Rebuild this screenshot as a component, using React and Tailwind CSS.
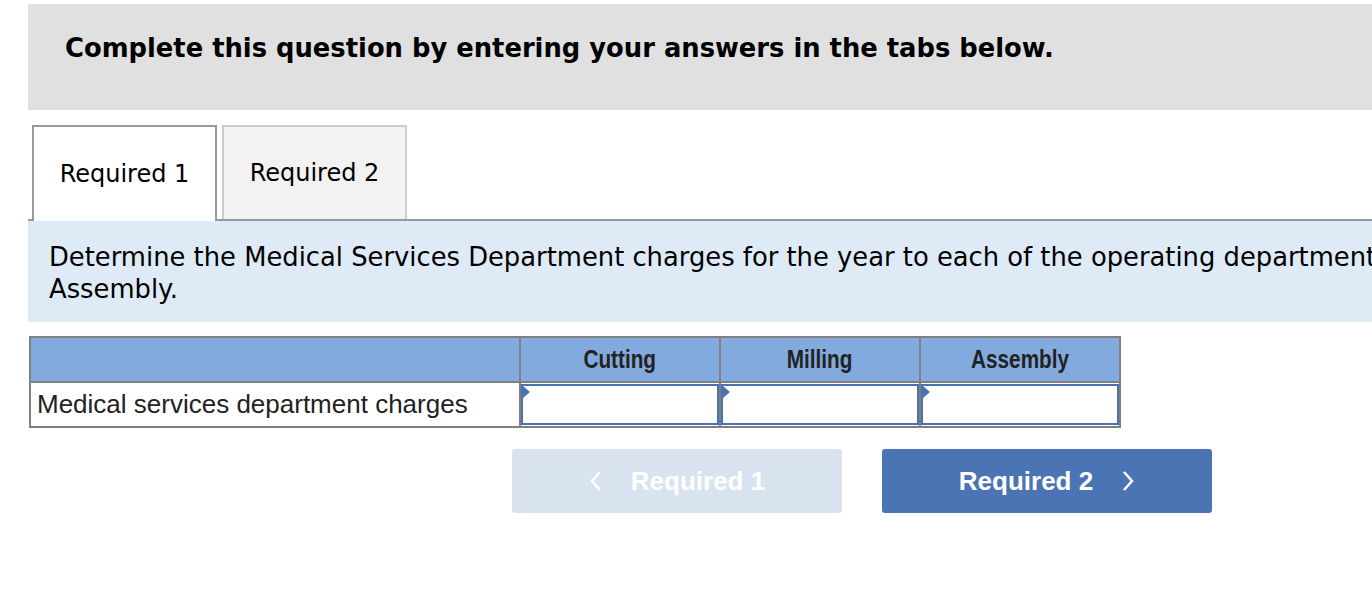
import React from "react";

const Cell = () => (
  <td className="w-[200px] h-[45px] border-2 border-[#808080] p-0 bg-white">
    <div className="relative h-[41px] border-2 border-[#4a72b0]">
      <span className="absolute left-0 top-0 w-0 h-0 border-y-[6px] border-y-transparent border-l-[7px] border-l-[#4a72b0]"></span>
    </div>
  </td>
);

const Head = ({ children }) => (
  <th className="w-[200px] h-[45px] border-2 border-[#808080] text-[25px] font-bold">
    <span className="inline-block scale-x-[0.83]">{children}</span>
  </th>
);

const App = () => {
  return (
    <div className="w-[1372px] h-[606px] overflow-hidden bg-white">
      <div className="w-[1500px] pl-[28px] pt-[4px] font-['DejaVu_Sans',Verdana,sans-serif] text-black">
        {/* Instructions bar */}
        <div className="h-[106px] bg-[#e0e0e0] pl-[37px] pt-[29px]">
          <h1 className="text-[25.8px] font-bold leading-[30px] whitespace-nowrap">
            Complete this question by entering your answers in the tabs below.
          </h1>
        </div>

        {/* Tabs */}
        <div className="mt-[15px] flex items-end gap-[5px] border-b-2 border-[#999] pl-[4px] h-[96px]">
          <div className="relative -mb-[2px] w-[185px] h-[96px] bg-white border-2 border-b-0 border-[#999] flex items-center justify-center text-[24px]">
            Required 1
          </div>
          <div className="w-[185px] h-[94px] bg-[#f2f2f2] border-2 border-b-0 border-[#ccc] flex items-center justify-center text-[24px]">
            Required 2
          </div>
        </div>

        {/* Question */}
        <div className="h-[101px] bg-[#deebf7] pl-[21px] pt-[20px] text-[25.8px] leading-[32px] whitespace-nowrap">
          Determine the Medical Services Department charges for the year to each of the operating departments, Cutting, Milling, and
          <br />
          Assembly.
        </div>

        {/* Answer table */}
        <table className="mt-[14px] ml-[1px] border-collapse font-['Liberation_Sans',Arial,sans-serif] text-[#222]">
          <thead>
            <tr className="bg-[#82aade]">
              <th className="w-[490px] h-[45px] border-2 border-[#808080]"></th>
              <Head>Cutting</Head>
              <Head>Milling</Head>
              <Head>Assembly</Head>
            </tr>
          </thead>
          <tbody>
            <tr>
              <td className="h-[45px] border-2 border-[#808080] pl-[6px] text-[26px] text-left whitespace-nowrap">
                Medical services department charges
              </td>
              <Cell />
              <Cell />
              <Cell />
            </tr>
          </tbody>
        </table>

        {/* Navigation */}
        <div className="mt-[21px] ml-[484px] flex gap-[40px] font-['Liberation_Sans',Arial,sans-serif]">
          <button className="w-[330px] h-[64px] rounded-[3px] bg-[#d9e3f0] text-white text-[26px] font-bold flex items-center justify-center gap-[28px]">
            <svg width="14" height="22" viewBox="0 0 14 22" fill="none" stroke="currentColor" strokeWidth="2.5">
              <path d="M11 2 L3 11 L11 20" />
            </svg>
            Required 1
          </button>
          <button className="w-[330px] h-[64px] rounded-[3px] bg-[#4a74b4] text-white text-[26px] font-bold flex items-center justify-center gap-[28px]">
            Required 2
            <svg width="14" height="22" viewBox="0 0 14 22" fill="none" stroke="currentColor" strokeWidth="2.5">
              <path d="M3 2 L11 11 L3 20" />
            </svg>
          </button>
        </div>
      </div>
    </div>
  );
};

export default App;
